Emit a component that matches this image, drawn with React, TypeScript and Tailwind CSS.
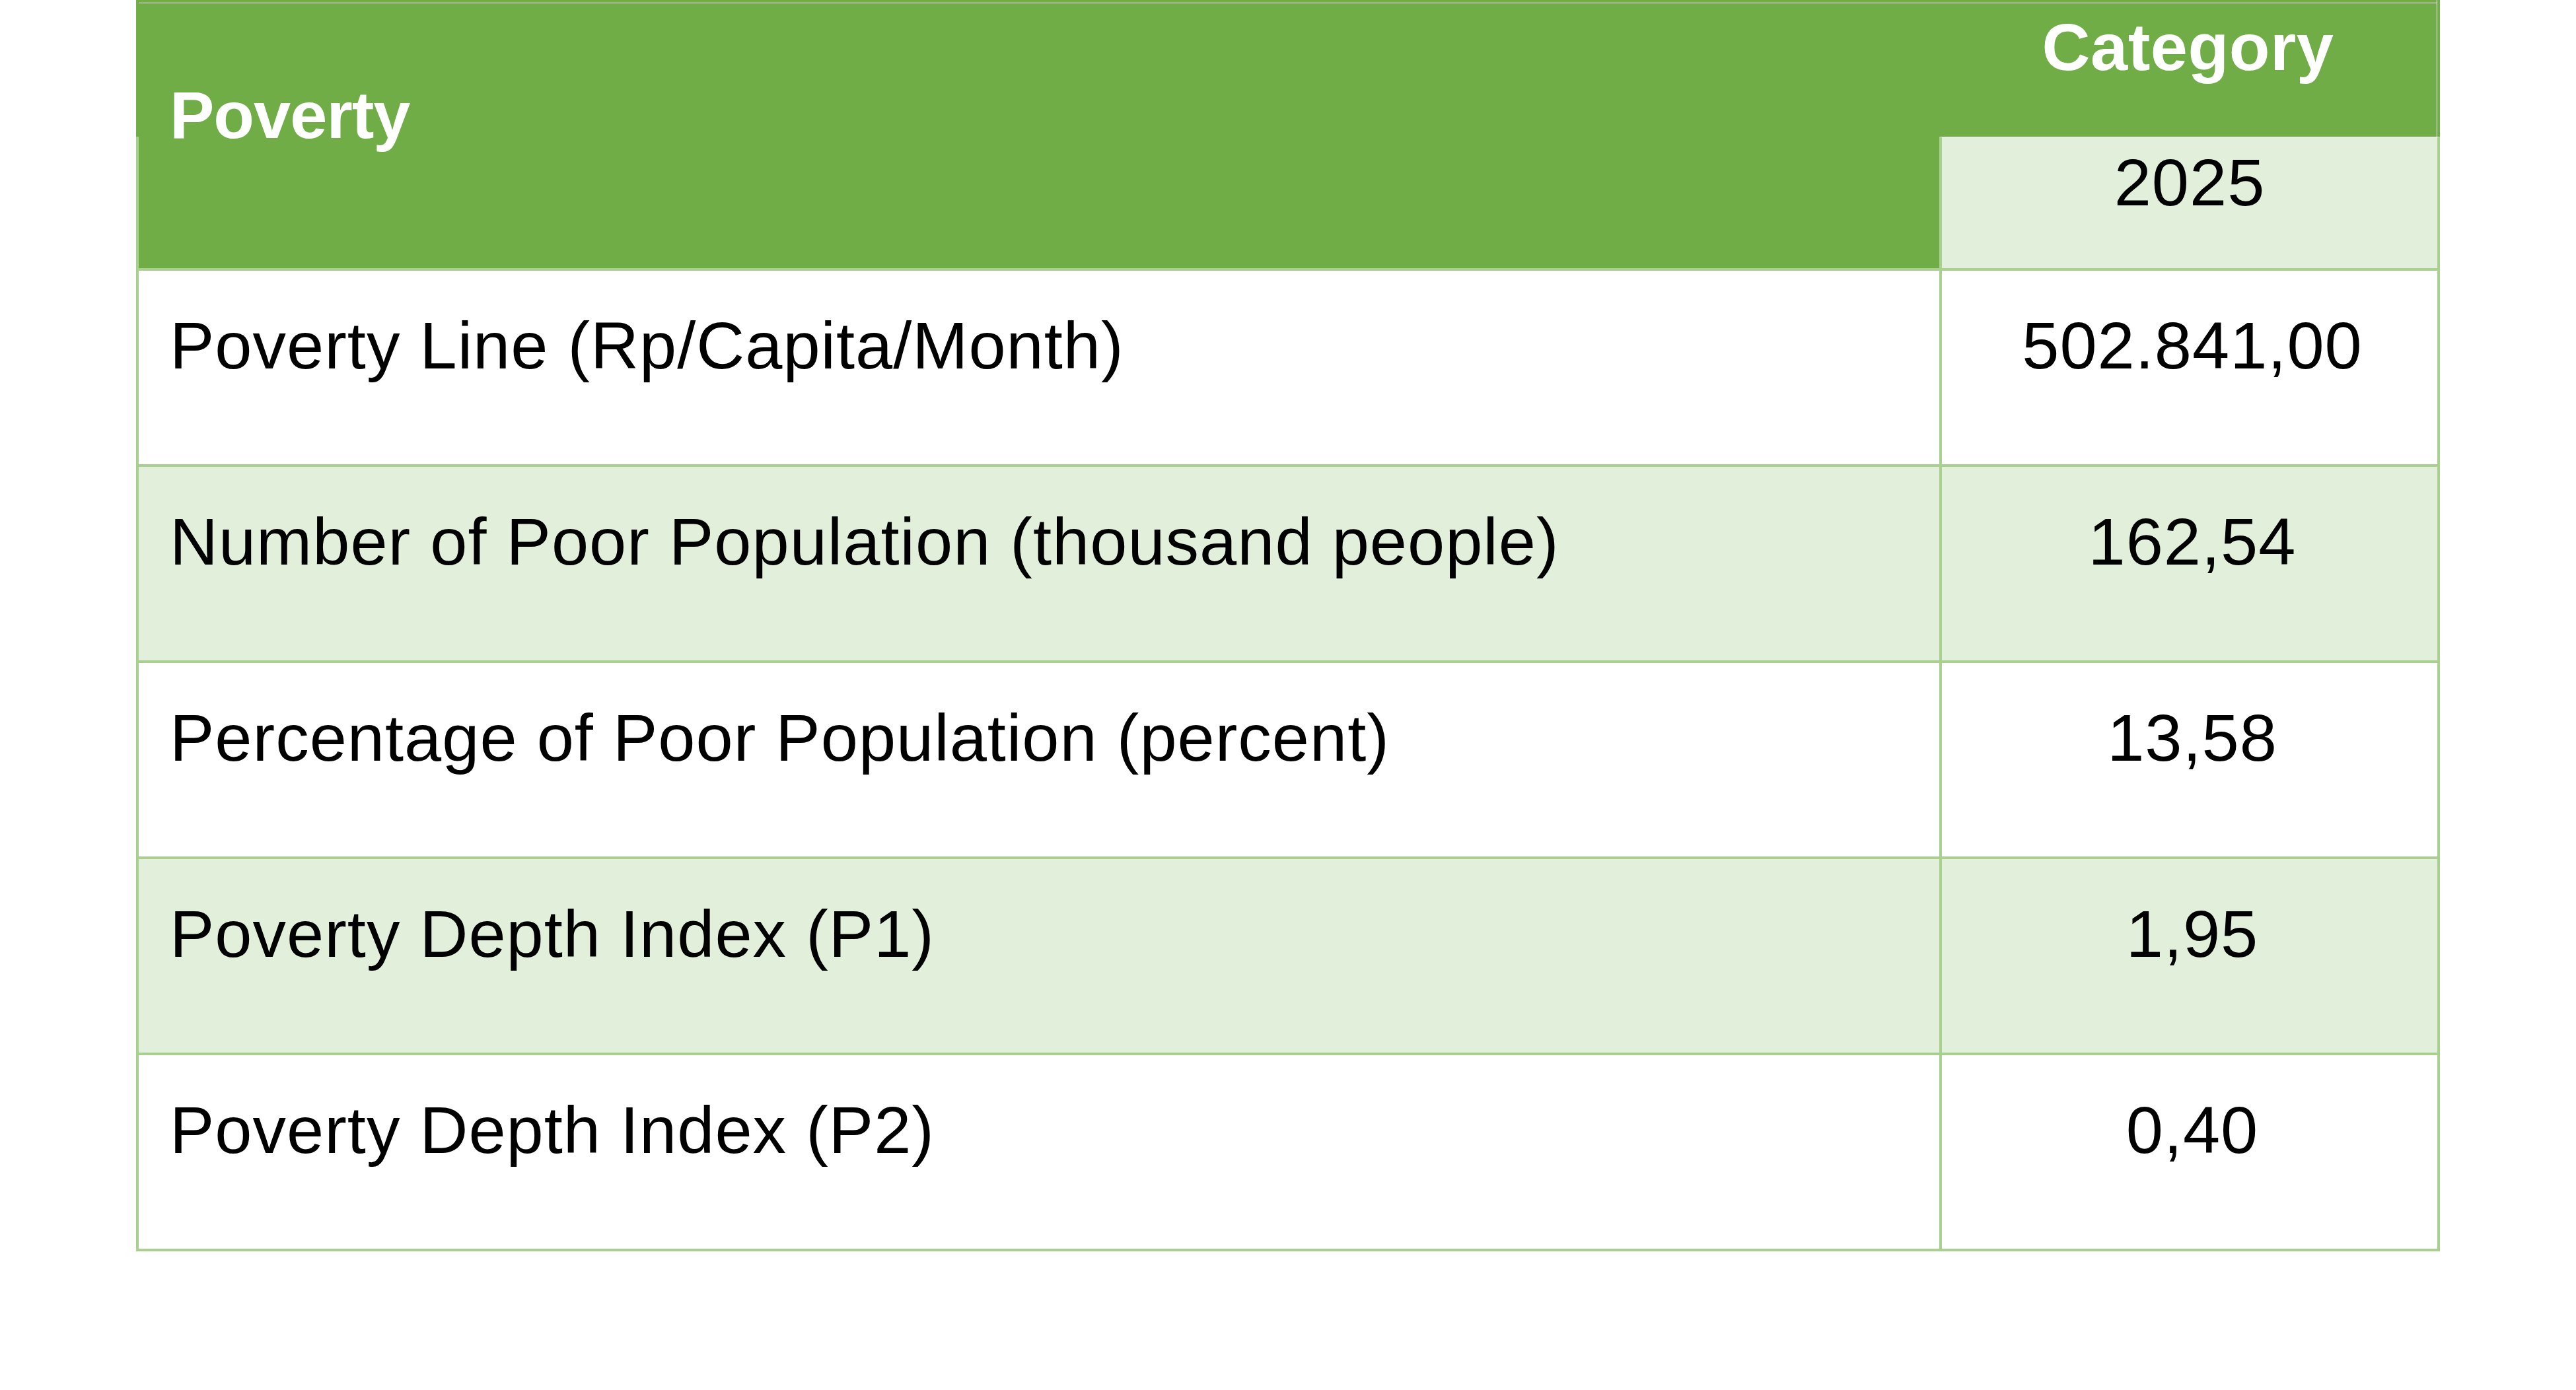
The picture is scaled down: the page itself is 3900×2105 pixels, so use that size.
const ROWS = [
  { label: 'Poverty Line (Rp/Capita/Month)', value: '502.841,00' },
  { label: 'Number of Poor Population (thousand people)', value: '162,54' },
  { label: 'Percentage of Poor Population (percent)', value: '13,58' },
  { label: 'Poverty Depth Index (P1)', value: '1,95' },
  { label: 'Poverty Depth Index (P2)', value: '0,40' },
]

export default function App() {
  return (
    <div
      className="w-[3900px] h-[2105px] bg-white text-black"
      style={{ fontFamily: '"Liberation Sans", Arial, sans-serif' }}
    >
      <div className="ml-[206px] w-[3488px]">
        {/* header */}
        <div className="relative grid grid-cols-[2730px_758px] grid-rows-[207px_199px] bg-[#70AD47] border-b-4 border-[#A9D08E]">
          <div className="row-span-2 relative pl-[51px] pt-[124px] text-[101px] leading-none font-bold text-white tracking-[-1px]">
            Poverty
            <div className="absolute left-0 top-[207px] bottom-0 w-[4px] bg-[#A9D08E]" />
          </div>
          <div className="flex justify-center pt-[21px] text-[101px] leading-none font-bold text-white tracking-[0.5px] border-r border-white mr-[4px]">
            Category
          </div>
          <div className="flex justify-center pt-[18px] bg-[#E2EFDA] border-l-4 border-r-4 border-t border-l-[#A9D08E] border-r-[#A9D08E] border-t-white text-[101px] leading-none tracking-[1px]">
            2025
          </div>
          <div className="absolute left-[4px] right-[5px] top-[4px] h-px bg-white" />
        </div>

        {/* body */}
        {ROWS.map((row, i) => (
          <div
            key={row.label}
            className={`grid grid-cols-[2730px_758px] h-[297px] border-l-4 border-r-4 border-b-4 border-[#A9D08E] ${
              i % 2 === 1 ? 'bg-[#E2EFDA]' : 'bg-white'
            }`}
          >
            <div className="pl-[47px] pt-[63px] text-[101px] leading-none tracking-[1px] whitespace-nowrap">
              {row.label}
            </div>
            <div className="flex justify-center pt-[63px] border-l-4 border-[#A9D08E] text-[101px] leading-none tracking-[1px] -ml-[4px]">
              {row.value}
            </div>
          </div>
        ))}
      </div>
    </div>
  )
}
